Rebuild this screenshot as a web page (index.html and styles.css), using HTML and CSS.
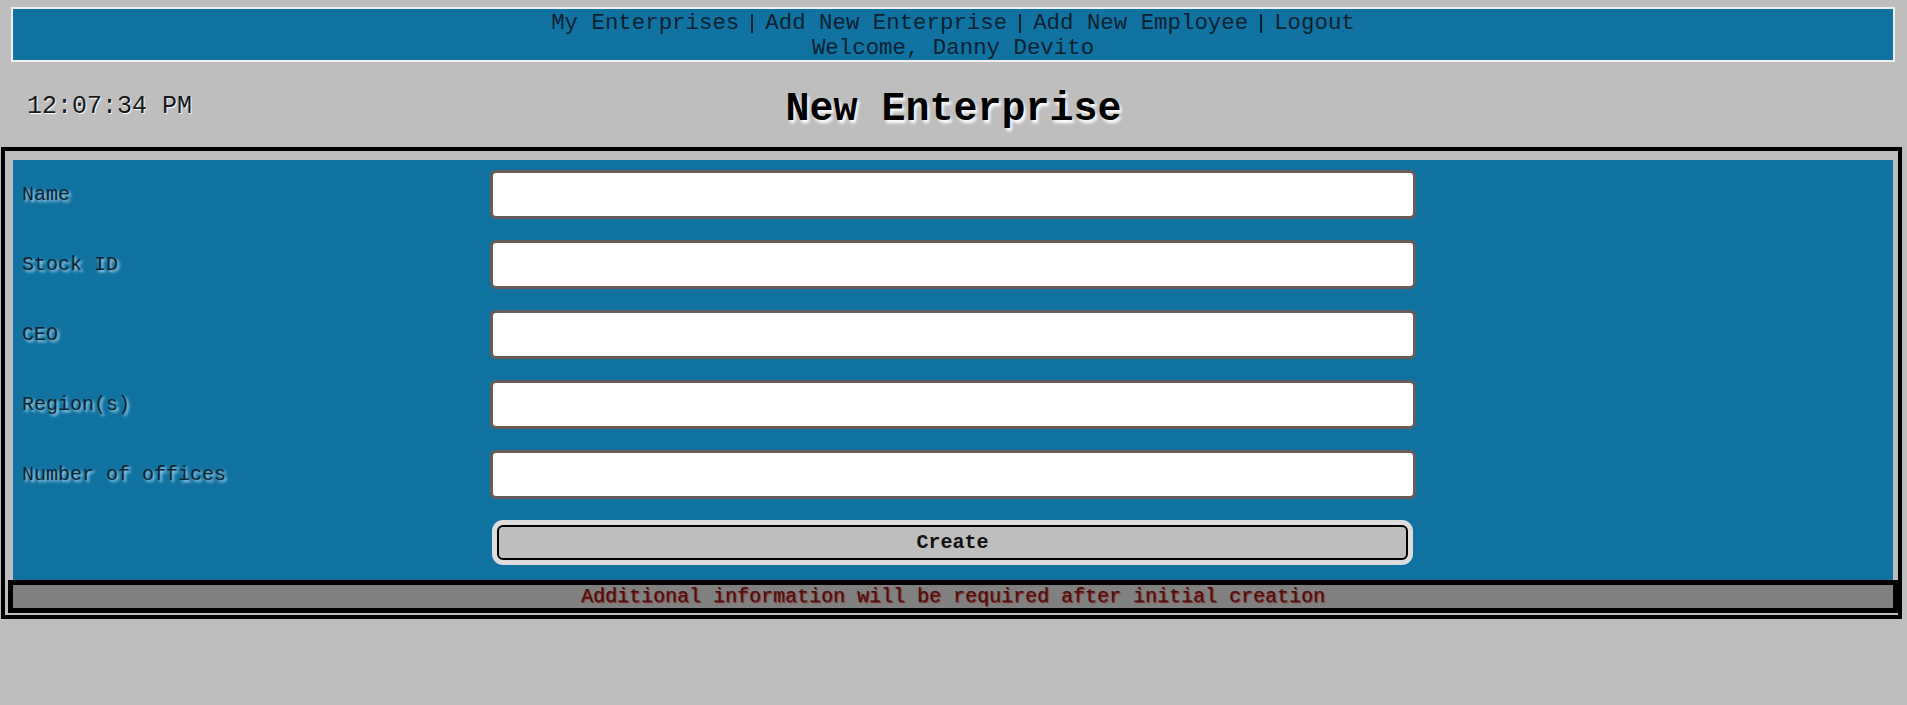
FILE: index.html
```html
<!DOCTYPE html>
<html lang="en">
<head>
<meta charset="utf-8">
<title>New Enterprise</title>
<link rel="stylesheet" href="styles.css">
</head>
<body>
<header class="topbar">
  <nav class="nav">
    <a href="#">My Enterprises</a>
    <a href="#">Add New Enterprise</a>
    <a href="#">Add New Employee</a>
    <a href="#">Logout</a>
  </nav>
  <div class="welcome">Welcome, Danny Devito</div>
</header>

<div class="titlerow">
  <div class="clock">12:07:34 PM</div>
  <h1 class="title">New Enterprise</h1>
  <div></div>
</div>

<div class="panel">
  <form class="form">
    <label class="label" for="f-name">Name</label>
    <input class="field" id="f-name" type="text">
    <label class="label" for="f-stock">Stock ID</label>
    <input class="field" id="f-stock" type="text">
    <label class="label" for="f-ceo">CEO</label>
    <input class="field" id="f-ceo" type="text">
    <label class="label" for="f-region">Region(s)</label>
    <input class="field" id="f-region" type="text">
    <label class="label" for="f-offices">Number of offices</label>
    <input class="field" id="f-offices" type="text">
    <div></div>
    <button class="create" type="button">Create</button>
  </form>
  <div class="note">Additional information will be required after initial creation</div>
</div>
</body>
</html>
```

FILE: styles.css
```css
html, body {
  margin: 0;
  padding: 0;
  background: #bebebe;
}
body {
  font-family: "Liberation Mono", "Courier New", monospace;
  color: #0b1b24;
}

.topbar {
  margin: 7px 12px 0 11px;
  border: 2px solid #f0f0f0;
  background: #1072a0;
  padding-top: 2px;
  font-size: 22.4px;
  color: #0c2230;
  text-align: center;
}
.nav {
  display: flex;
  justify-content: center;
  align-items: center;
  height: 25px;
}
.nav a {
  color: inherit;
  text-decoration: none;
  line-height: 19px;
}
.nav a + a {
  border-left: 2px solid #0c2230;
  margin-left: 12px;
  padding-left: 12px;
}
.welcome {
  line-height: 24px;
}

.titlerow {
  display: grid;
  grid-template-columns: 1fr auto 1fr;
  align-items: start;
  margin-top: 25px;
}
.clock {
  font-size: 25px;
  margin-top: 5px;
  padding-left: 27px;
  color: #181818;
  text-shadow: 1px 1px 1px #ffffff;
}
.title {
  margin: 0;
  font-size: 40px;
  font-weight: bold;
  color: #000;
  text-shadow: 2px 3px 3px #ffffff;
}

.panel {
  margin: 15px 5px 0 1px;
  border: 4px solid #000;
  padding: 5px 0 2px 3px;
}
.form {
  margin: 4px 5px 0 5px;
  background: #1072a0;
  padding: 10px 0 20px 9px;
  display: grid;
  grid-template-columns: 468px 926px;
  row-gap: 21px;
  align-items: center;
}
.label {
  font-size: 20px;
  color: #102430;
  text-shadow: 2px 2px 3px #b8e0f6;
}
.field {
  box-sizing: border-box;
  height: 49px;
  width: 926px;
  margin: 0;
  border: 3px solid #675d56;
  border-radius: 6px;
  background: #fff;
}
.create {
  box-sizing: border-box;
  height: 35px;
  margin: 5px 8px 0 7px;
  border: 2px solid #000;
  border-radius: 6px;
  background: #bebebe;
  box-shadow: 0 0 0 5px #dcdcdc;
  font-family: "Liberation Mono", "Courier New", monospace;
  font-size: 20px;
  font-weight: bold;
  color: #111;
}
.note {
  border: 5px solid #000;
  background: #808080;
  font-size: 20px;
  line-height: 23px;
  text-align: center;
  color: #4a1010;
  text-shadow: 1px 1px 1px #8a1f1f;
}
```
